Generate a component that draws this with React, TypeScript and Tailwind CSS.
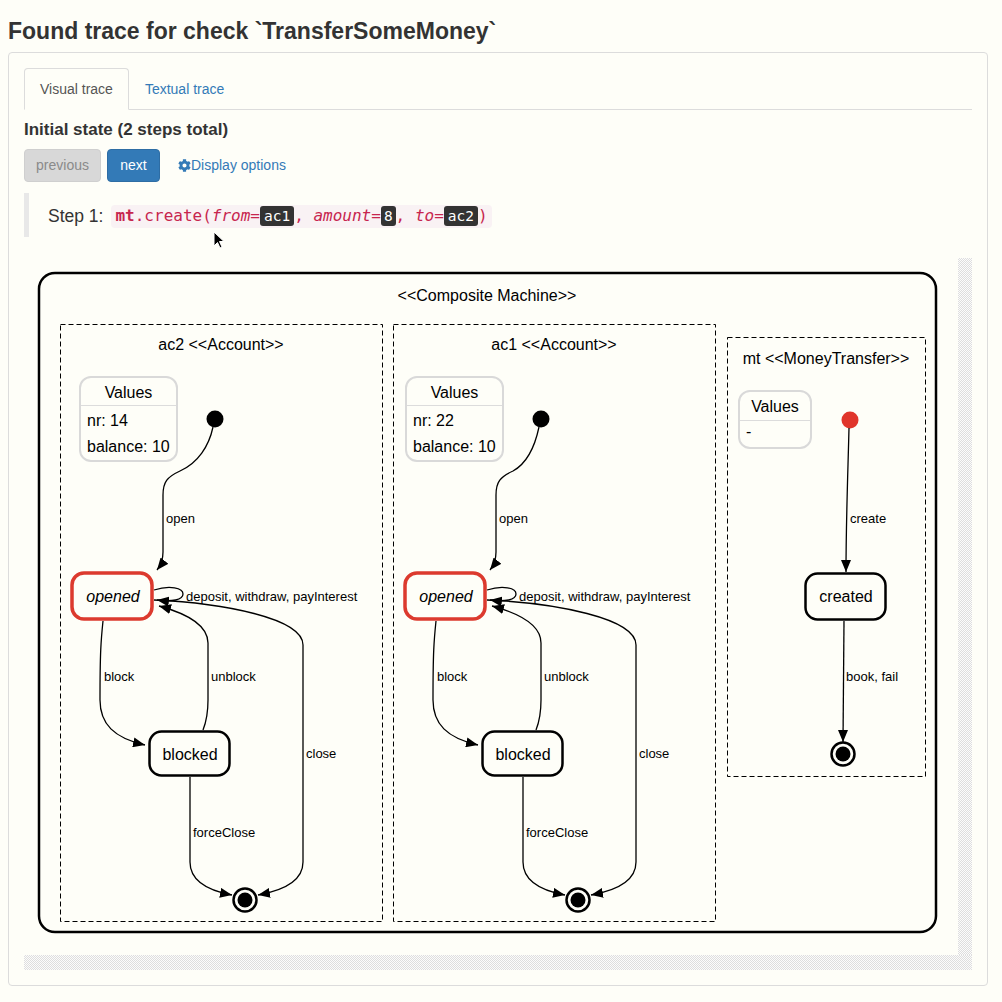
import { FaCog } from 'react-icons/fa';

const stipple =
  'bg-[image:repeating-conic-gradient(#dedede_0%_25%,#fcfcfc_0%_50%)] bg-[length:2px_2px]';

interface AccountProps {
  dx: number;
  vdx: number;
  title: string;
  nr: number;
}

function Account({ dx, vdx, title, nr }: AccountProps) {
  return (
    <g transform={`translate(${dx} 0)`}>
      <rect x={60.5} y={324.5} width={322} height={597} fill="none" stroke="#000" strokeDasharray="5 3" />
      <text x={221} y={350} textAnchor="middle" fontSize={16}>
        {title}
      </text>

      <g transform={`translate(${vdx} 0)`}>
        <rect x={80} y={377} width={97} height={84} rx={11} fill="#fefef8" stroke="#d9d9d9" strokeWidth={2} />
        <line x1={81} x2={176} y1={405.5} y2={405.5} stroke="#dcdcdc" />
        <text x={128.5} y={398} textAnchor="middle" fontSize={16}>
          Values
        </text>
        <text x={87} y={426} fontSize={16}>{`nr: ${nr}`}</text>
        <text x={87} y={452} fontSize={16}>
          balance: 10
        </text>
        <circle cx={215} cy={419} r={8.5} fill="#000" />
      </g>

      {/* open */}
      <path
        d={`M${213 + vdx},427 C${209 + vdx},446 ${198 + vdx / 2},463 180,471 C167,477 163,482 163,495 L163,552 C163,560 161,565 157,570`}
        fill="none"
        stroke="#000"
        strokeWidth={1.3}
        markerEnd="url(#arr)"
      />
      <text x={166} y={522.5} fontSize={13}>
        open
      </text>

      {/* opened */}
      <rect x={72} y={573} width={80} height={46} rx={12} fill="#fefef8" stroke="#dc3a2e" strokeWidth={3.5} />
      <text x={113} y={601.5} textAnchor="middle" fontSize={16} fontStyle="italic">
        opened
      </text>

      {/* self loop */}
      <path
        d="M154,590 C170,585 183,588 183,594 C183,600 172,602 157,600"
        fill="none"
        stroke="#000"
        strokeWidth={1.3}
        markerEnd="url(#arr)"
      />
      <text x={186} y={600.5} fontSize={13}>
        deposit, withdraw, payInterest
      </text>

      {/* block */}
      <path
        d="M103,621 C101,640 100,652 100,700 C100,724 114,738 145,745"
        fill="none"
        stroke="#000"
        strokeWidth={1.3}
        markerEnd="url(#arr)"
      />
      <text x={104} y={680.5} fontSize={13}>
        block
      </text>

      {/* blocked */}
      <rect x={149.5} y={731.5} width={80} height={44} rx={12} fill="#fefef8" stroke="#000" strokeWidth={2.5} />
      <text x={190} y={759.5} textAnchor="middle" fontSize={16}>
        blocked
      </text>

      {/* unblock */}
      <path
        d="M203,730 C207,720 208,712 208,700 L208,643 C208,628 192,615 159,606"
        fill="none"
        stroke="#000"
        strokeWidth={1.3}
        markerEnd="url(#arr)"
      />
      <text x={211} y={680.5} fontSize={13}>
        unblock
      </text>

      {/* close */}
      <path
        d="M154,600 C222,603 303,618 303,645 L303,862 C303,880 286,890 258,895"
        fill="none"
        stroke="#000"
        strokeWidth={1.3}
        markerEnd="url(#arr)"
      />
      <text x={306} y={757.5} fontSize={13}>
        close
      </text>

      {/* forceClose */}
      <path
        d="M190,777 L190,862 C190,880 205,890 232,895"
        fill="none"
        stroke="#000"
        strokeWidth={1.3}
        markerEnd="url(#arr)"
      />
      <text x={193} y={836.5} fontSize={13}>
        forceClose
      </text>

      <circle cx={245} cy={900} r={11.5} fill="#fefef8" stroke="#000" strokeWidth={2.5} />
      <circle cx={245} cy={900} r={7.5} fill="#000" />
    </g>
  );
}

function Diagram() {
  return (
    <svg
      width={934}
      height={697}
      viewBox="24 258 934 697"
      className="block"
      fontFamily="'Liberation Sans', Arial, sans-serif"
    >
      <defs>
        <marker
          id="arr"
          viewBox="0 0 12 10"
          refX={12}
          refY={5}
          markerWidth={12}
          markerHeight={10}
          markerUnits="userSpaceOnUse"
          orient="auto"
        >
          <path d="M0,0 L12,5 L0,10 z" fill="#000" />
        </marker>
      </defs>

      <rect x={39} y={273} width={897} height={659} rx={16} fill="none" stroke="#000" strokeWidth={2.5} />
      <text x={487} y={300.5} textAnchor="middle" fontSize={16}>
        {'<<Composite Machine>>'}
      </text>

      <Account dx={0} vdx={0} title="ac2 <<Account>>" nr={14} />
      <Account dx={333} vdx={-7} title="ac1 <<Account>>" nr={22} />

      {/* mt */}
      <rect x={727.5} y={337.5} width={198} height={439} fill="none" stroke="#000" strokeDasharray="5 3" />
      <text x={826} y={363.5} textAnchor="middle" fontSize={16}>
        {'mt <<MoneyTransfer>>'}
      </text>
      <rect x={739} y={391} width={72} height={57} rx={11} fill="#fefef8" stroke="#d9d9d9" strokeWidth={2} />
      <line x1={740} x2={810} y1={420.5} y2={420.5} stroke="#dcdcdc" />
      <text x={775} y={411.5} textAnchor="middle" fontSize={16}>
        Values
      </text>
      <text x={746} y={437} fontSize={16}>
        -
      </text>
      <circle cx={850} cy={420} r={8.5} fill="#e0352b" />
      <path d="M849,428 C848,470 846,520 846,572" fill="none" stroke="#000" strokeWidth={1.3} markerEnd="url(#arr)" />
      <text x={850} y={522.5} fontSize={13}>
        create
      </text>
      <rect x={805.5} y={573.5} width={80} height={46} rx={12} fill="#fefef8" stroke="#000" strokeWidth={2.5} />
      <text x={846} y={601.5} textAnchor="middle" fontSize={16}>
        created
      </text>
      <path d="M844,621 C844,660 843,700 843,742" fill="none" stroke="#000" strokeWidth={1.3} markerEnd="url(#arr)" />
      <text x={846} y={680.5} fontSize={13}>
        book, fail
      </text>
      <circle cx={843} cy={754} r={11.5} fill="#fefef8" stroke="#000" strokeWidth={2.5} />
      <circle cx={843} cy={754} r={7.5} fill="#000" />
    </svg>
  );
}

export default function App() {
  return (
    <div className="relative min-h-screen bg-[#fefef8] text-[#333] font-['Liberation_Sans',Arial,sans-serif]">
      <h2 className="h-[52px] pt-[17px] pl-2 text-[23px] leading-[28px] font-bold">
        Found trace for check `TransferSomeMoney`
      </h2>

      <div className="mx-2 w-[980px] border border-[#dcdcdc] rounded p-[15px]">
        <ul className="flex border-b border-[#dcdcdc] text-[14px]">
          <li className="-mb-px h-[42px] px-[15px] py-[10px] leading-[20px] border border-[#dcdcdc] border-b-transparent rounded-t bg-[#fefef8] text-[#555]">
            Visual trace
          </li>
          <li className="-mb-px h-[42px] px-[15px] py-[10px] leading-[20px] border border-transparent text-[#337ab7]">
            Textual trace
          </li>
        </ul>

        <h4 className="mt-[10px] h-[20px] leading-[20px] text-[17px] font-bold">Initial state (2 steps total)</h4>

        <div className="mt-[9px] flex items-center text-[14px]">
          <button className="w-[77px] h-[33px] rounded border border-[#cfcfcf] bg-[#d8d8d8] text-[#8a8a8a]">
            previous
          </button>
          <button className="ml-[6px] w-[53px] h-[33px] rounded border border-[#2e6da4] bg-[#337ab7] text-white">
            next
          </button>
          <span className="ml-[18px] flex items-center text-[#337ab7]">
            <FaCog className="w-[13px] h-[13px]" />
            Display options
          </span>
        </div>

        <div className="mt-[11px] h-[44px] flex items-center border-l-[5px] border-[#e8e8e8] pl-[19px] text-[17.5px]">
          <span className="mt-[2px]">Step 1:</span>
          <code className="ml-[8px] mt-[2px] h-[23px] px-[4px] flex items-center rounded bg-[#f9f2f4] text-[#c7254e] text-[16px] font-['DejaVu_Sans_Mono',monospace]">
            <b>mt</b>.create(<i>from=</i>
            <kbd className="px-[4px] h-[20px] leading-[20px] rounded-[3px] bg-[#333] text-white text-[14.5px] font-['DejaVu_Sans_Mono',monospace]">
              ac1
            </kbd>
            ,&nbsp;<i>amount=</i>
            <kbd className="px-[3px] h-[20px] leading-[20px] rounded-[3px] bg-[#333] text-white text-[14.5px] font-['DejaVu_Sans_Mono',monospace]">
              8
            </kbd>
            ,&nbsp;<i>to=</i>
            <kbd className="px-[4px] h-[20px] leading-[20px] rounded-[3px] bg-[#333] text-white text-[14.5px] font-['DejaVu_Sans_Mono',monospace]">
              ac2
            </kbd>
            )
          </code>
        </div>

        <div className="mt-[21px] h-[712px] flex flex-col">
          <div className="flex flex-1 min-h-0">
            <div className="flex-1 overflow-hidden">
              <Diagram />
            </div>
            <div className={`w-[14px] ${stipple}`} />
          </div>
          <div className="h-[15px] flex">
            <div className={`flex-1 ${stipple}`} />
            <div className={`w-[14px] ${stipple}`} />
          </div>
        </div>
      </div>

      {/* mouse pointer */}
      <svg className="absolute left-[213px] top-[231px]" width={12} height={18} viewBox="0 0 12 18">
        <path d="M1,1 L1,15 L4.5,11.5 L7,17 L9,16 L6.5,10.5 L11,10.5 Z" fill="#000" stroke="#fff" strokeWidth={1} />
      </svg>
    </div>
  );
}
